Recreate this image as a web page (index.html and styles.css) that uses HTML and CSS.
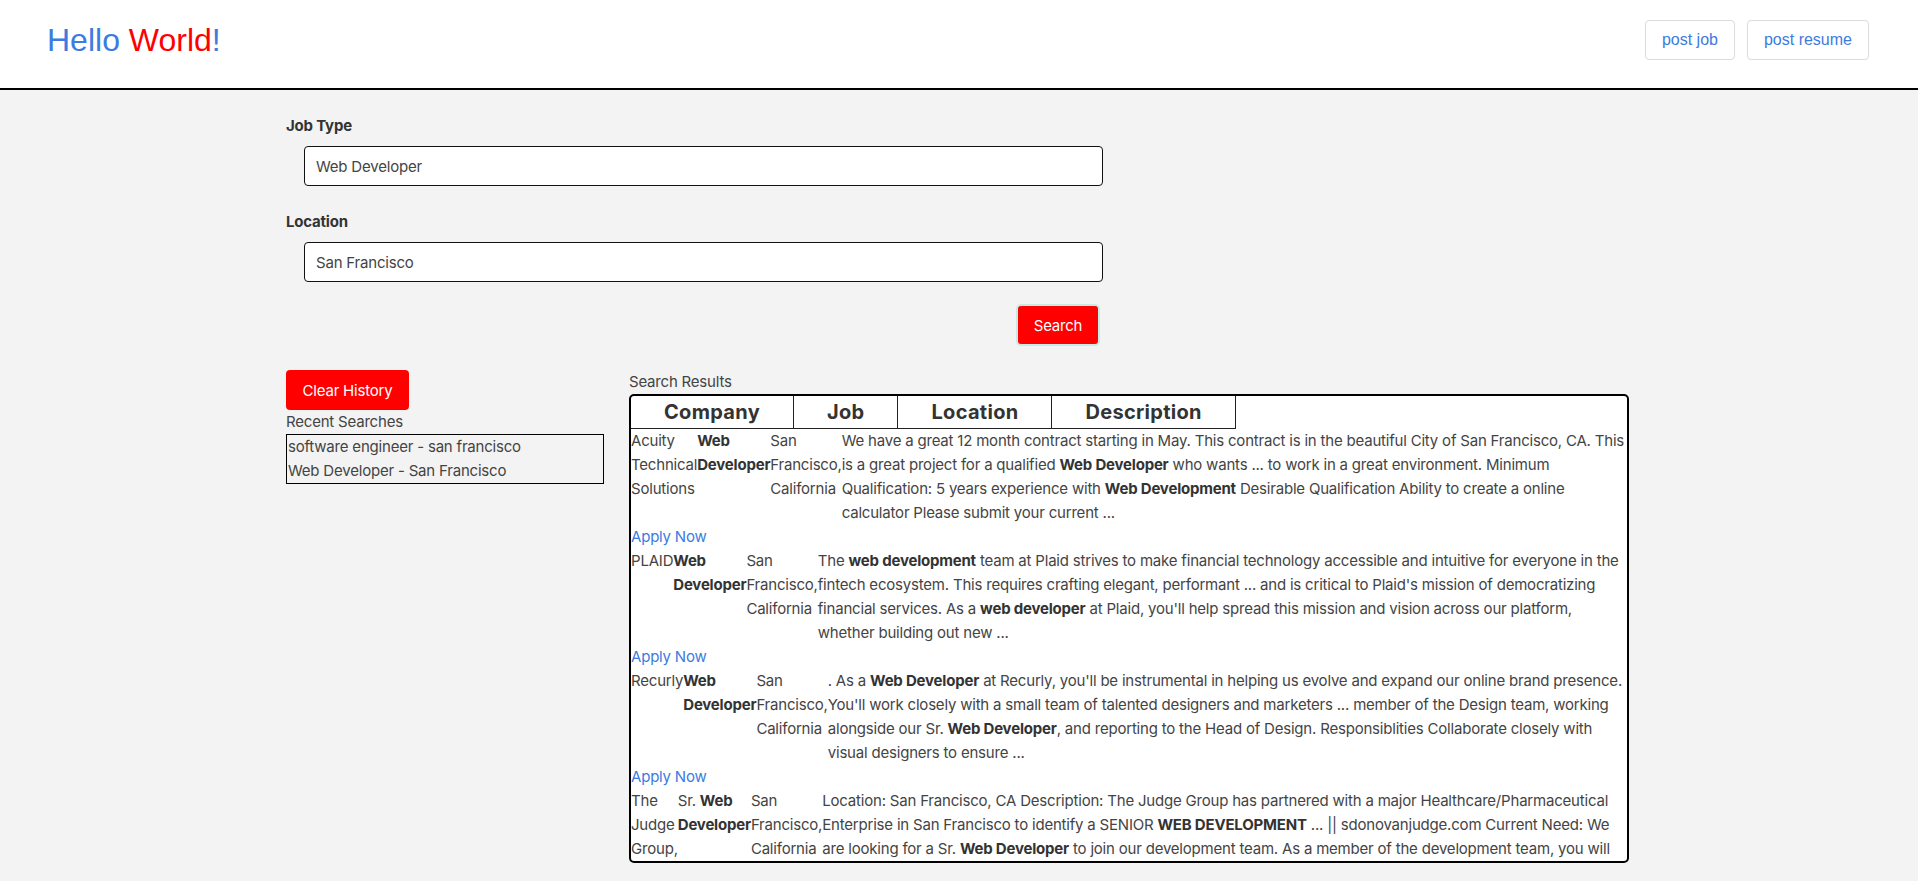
FILE: index.html
```html
<!DOCTYPE html>
<html lang="en">
<head>
  <meta charset="UTF-8" />
  <meta name="viewport" content="width=device-width, initial-scale=1.0"/>
  <title>Job Search</title>
  <link rel="stylesheet" href="styles.css">
</head>
<body>
  <header class="topbar">
    <h1 class="brand"><span class="blue">Hello</span> <span class="red">World</span><span class="blue">!</span></h1>
    <nav class="actions">
      <button class="action-btn">post job</button>
      <button class="action-btn">post resume</button>
    </nav>
  </header>

  <main class="page">
    <form class="search-form" onsubmit="return false">
      <label for="jobType">Job Type</label>
      <input type="text" id="jobType" value="Web Developer" />

      <label for="location">Location</label>
      <input type="text" id="location" value="San Francisco" />

      <div class="form-actions">
        <button class="red-btn search-btn">Search</button>
      </div>
    </form>

    <div class="content">
      <aside class="history">
        <button class="red-btn clear-btn">Clear History</button>
        <div class="history-title">Recent Searches</div>
        <ul class="history-list">
          <li>software engineer - san francisco</li>
          <li>Web Developer - San Francisco</li>
        </ul>
      </aside>

      <section class="results">
        <div class="results-title">Search Results</div>
        <div class="results-box">
          <table class="results-head">
            <tr>
              <th>Company</th>
              <th>Job</th>
              <th>Location</th>
              <th>Description</th>
            </tr>
          </table>

          <div class="job">
            <div class="job-row">
              <span class="company">Acuity Technical Solutions</span>
              <span class="title"><b>Web Developer</b></span>
              <span class="loc">San Francisco, California</span>
              <span class="desc">We have a great 12 month contract starting in May. This contract is in the beautiful City of San Francisco, CA. This is a great project for a qualified <b>Web Developer</b> who wants ... to work in a great environment. Minimum Qualification: 5 years experience with <b>Web Development</b> Desirable Qualification Ability to create a online calculator Please submit your current ...</span>
            </div>
            <a class="apply" href="#">Apply Now</a>
          </div>

          <div class="job">
            <div class="job-row">
              <span class="company">PLAID</span>
              <span class="title"><b>Web Developer</b></span>
              <span class="loc">San Francisco, California</span>
              <span class="desc">The <b>web development</b> team at Plaid strives to make financial technology accessible and intuitive for everyone in the fintech ecosystem. This requires crafting elegant, performant ... and is critical to Plaid's mission of democratizing financial services. As a <b>web developer</b> at Plaid, you'll help spread this mission and vision across our platform, whether building out new ...</span>
            </div>
            <a class="apply" href="#">Apply Now</a>
          </div>

          <div class="job">
            <div class="job-row">
              <span class="company">Recurly</span>
              <span class="title"><b>Web Developer</b></span>
              <span class="loc">San Francisco, California</span>
              <span class="desc">. As a <b>Web Developer</b> at Recurly, you'll be instrumental in helping us evolve and expand our online brand presence. You'll work closely with a small team of talented designers and marketers ... member of the Design team, working alongside our Sr. <b>Web Developer</b>, and reporting to the Head of Design. Responsiblities Collaborate closely with visual designers to ensure ...</span>
            </div>
            <a class="apply" href="#">Apply Now</a>
          </div>

          <div class="job">
            <div class="job-row">
              <span class="company">The Judge Group, Inc.</span>
              <span class="title">Sr. <b>Web Developer</b></span>
              <span class="loc">San Francisco, California</span>
              <span class="desc">Location: San Francisco, CA Description: The Judge Group has partnered with a major Healthcare/Pharmaceutical Enterprise in San Francisco to identify a SENIOR <b>WEB DEVELOPMENT</b> ... || sdonovanjudge.com Current Need: We are looking for a Sr. <b>Web Developer</b> to join our development team. As a member of the development team, you will be responsible for building and maintaining web applications ...</span>
            </div>
            <a class="apply" href="#">Apply Now</a>
          </div>
        </div>
      </section>
    </div>
  </main>
</body>
</html>
```

FILE: styles.css
```css
body {
  margin: 0;
  background: #f3f3f3;
  font-family: 'Inter', 'Noto Sans', sans-serif;
  font-size: 15px;
  line-height: 24px;
  letter-spacing: -0.2px;
  color: #444;
}

/* top bar */
.topbar {
  height: 90px;
  box-sizing: border-box;
  background: #ffffff;
  border-bottom: 2px solid #000;
  display: flex;
  justify-content: space-between;
  align-items: flex-start;
  padding: 20px 49px 0 47px;
  letter-spacing: normal;
}

.brand {
  margin: 0;
  font: 400 32px/40px 'Liberation Sans', Arial, sans-serif;
}

.blue {
  color: #3d7be0;
}

.red {
  color: #ff0000;
}

.actions {
  display: flex;
  gap: 12px;
}

.action-btn {
  height: 40px;
  padding: 0 16px;
  border: 1px solid #dcdcdc;
  border-radius: 4px;
  background: #fff;
  color: #3d7be0;
  font: 16px 'Liberation Sans', Arial, sans-serif;
  cursor: pointer;
}

/* page */
.page {
  width: 1346px;
  margin: 0 auto;
}

.search-form {
  width: 817px;
  padding-top: 24px;
}

.search-form label {
  display: block;
  font-weight: 700;
  color: #333;
}

.search-form input {
  display: block;
  box-sizing: border-box;
  width: calc(100% - 18px);
  height: 40px;
  margin: 8px 0 24px 18px;
  padding: 0 11px;
  border: 1px solid #111;
  border-radius: 4px;
  background: #fff;
  font-family: inherit;
  font-size: 15px;
  letter-spacing: inherit;
  color: #444;
}

.search-form input:last-of-type {
  margin-bottom: 22px;
}

.form-actions {
  display: flex;
  justify-content: flex-end;
  padding-right: 3px;
}

.red-btn {
  background: #ff0000;
  color: #fff;
  border: none;
  border-radius: 4px;
  font-family: inherit;
  font-size: 15px;
  letter-spacing: inherit;
  cursor: pointer;
}

.search-btn {
  width: 84px;
  height: 42px;
  border: 2px solid #c2ece6;
  border-radius: 5px;
}

.content {
  display: grid;
  grid-template-columns: 318px 1000px;
  column-gap: 25px;
  margin-top: 24px;
}

/* history */
.clear-btn {
  width: 123px;
  height: 40px;
}

.history-list {
  list-style: none;
  margin: 0;
  padding: 0 1px;
  border: 1px solid #000;
}

/* results */
.results-box {
  height: 469px;
  box-sizing: border-box;
  border: 2px solid #000;
  border-radius: 5px;
  background: #fff;
  overflow: hidden;
}

.results-head {
  border-collapse: collapse;
}

.results-head th {
  padding: 0 33px;
  line-height: 32px;
  font-size: 20px;
  letter-spacing: 0.3px;
  color: #333;
  border-right: 1px solid #222;
  border-bottom: 1px solid #222;
}

.job-row {
  display: flex;
}

.company,
.title,
.loc {
  flex: none;
  width: min-content;
}

.desc {
  flex: 1;
  min-width: 0;
}

.job b {
  color: #333;
}

.apply {
  display: block;
  color: #3d7be0;
  text-decoration: none;
}
```
